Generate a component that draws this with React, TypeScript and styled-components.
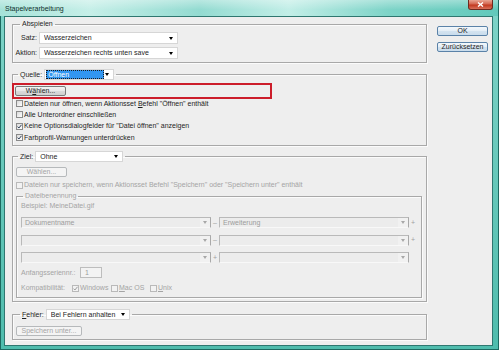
import React from "react";
import styled, { createGlobalStyle } from "styled-components";

const Global = createGlobalStyle`
  html, body { margin: 0; padding: 0; }
  body {
    width: 499px; height: 350px; overflow: hidden;
    font-family: "Liberation Sans", Arial, sans-serif;
    font-size: 7px; color: #1e1e1e;
  }
  #root { width: 499px; height: 350px; }
`;

const Window = styled.div`
  box-sizing: border-box;
  width: 499px;
  height: 350px;
  display: flex;
  flex-direction: column;
  background: linear-gradient(180deg, #7fd4c8 0%, #4fbcad 100%);
  border: 1px solid #1d6a61;
  border-top: none;
  padding: 0 5px 3px 3px;
`;

const TitleBar = styled.div`
  height: 16px;
  margin: 0 -5px 0 -4px;
  display: flex;
  align-items: flex-start;
  justify-content: space-between;
  background:
    linear-gradient(180deg, rgba(255,255,255,0.35) 0%, rgba(255,255,255,0) 60%),
    linear-gradient(90deg, #a6e2d8 0%, #c6efe8 18%, #93dbd1 40%, #c2eee7 58%, #7ed4c8 78%, #62c9bb 100%);
`;

const Title = styled.span`
  margin: 5px 0 0 5px;
  font-size: 7px;
  line-height: 8px;
  color: #10302c;
`;

const CloseBtn = styled.div`
  box-sizing: border-box;
  width: 25px;
  height: 10px;
  margin-right: 5px;
  border: 1px solid #6e2a20;
  border-top: none;
  border-radius: 0 0 3px 3px;
  background: linear-gradient(180deg, #e9a593 0%, #d46650 45%, #c2381f 55%, #d8705a 100%);
  display: flex;
  align-items: center;
  justify-content: center;
`;

const Client = styled.div`
  flex: 1;
  box-sizing: border-box;
  background: #eeeeee;
  border: 1px solid #2f7770;
  display: flex;
  align-items: flex-start;
  padding: 3px 0 0 7px;
`;

const Main = styled.div`
  width: 415px;
  display: flex;
  flex-direction: column;
`;

const Side = styled.div`
  margin: 6px 0 0 10px;
  display: flex;
  flex-direction: column;
  gap: 6px;
`;

const Group = styled.fieldset<{ $mt?: number }>`
  margin: ${(p) => p.$mt ?? 0}px 0 0 0;
  padding: 0;
  min-width: 0;
  border: 1px solid #a8a8a8;
  box-shadow: inset 1px 1px 0 #fbfbfb, 1px 1px 0 #fbfbfb;
`;

const Legend = styled.legend<{ $ml: number }>`
  margin-left: ${(p) => p.$ml}px;
  padding: 0 2px;
`;

const LegendRow = styled.span<{ $h: number; $gap?: number; $disabled?: boolean }>`
  display: flex;
  align-items: center;
  gap: ${(p) => p.$gap ?? 2}px;
  height: ${(p) => p.$h}px;
  line-height: ${(p) => p.$h}px;
  color: ${(p) => (p.$disabled ? "#a4a4a4" : "#1e1e1e")};
`;

const Body = styled.div<{ $p: string }>`
  padding: ${(p) => p.$p};
  display: flex;
  flex-direction: column;
  align-items: flex-start;
`;

const FormGrid = styled.div`
  display: grid;
  grid-template-columns: 24px 139px;
  grid-auto-rows: 12px;
  column-gap: 2px;
  row-gap: 3px;
  align-items: center;
`;

const Label = styled.span<{ $w?: number; $disabled?: boolean }>`
  text-align: ${(p) => (p.$w ? "left" : "right")};
  ${(p) => (p.$w ? `width: ${p.$w}px; flex: none;` : "")}
  line-height: 8px;
  white-space: nowrap;
  color: ${(p) => (p.$disabled ? "#a4a4a4" : "#1e1e1e")};
`;

const Select = styled.div<{ $w: number; $h: number }>`
  box-sizing: border-box;
  width: ${(p) => p.$w}px;
  height: ${(p) => p.$h}px;
  background: #fff;
  border: 1px solid #d6d6d6;
  display: flex;
  align-items: center;
  padding: 0 4px 0 4px;
  white-space: nowrap;
  line-height: 8px;
`;

const SelText = styled.span`
  flex: 1;
  overflow: hidden;
`;

const Highlight = styled.span`
  box-sizing: border-box;
  width: 58px;
  height: 9px;
  margin-left: -3px;
  background: #3296f0;
  color: #fff;
  outline: 1px dotted #1a1a1a;
  outline-offset: -1px;
  padding-left: 2px;
  line-height: 9px;
`;

const Arrow = styled.span<{ $color?: string }>`
  width: 0;
  height: 0;
  flex: none;
  border-left: 2.5px solid transparent;
  border-right: 2.5px solid transparent;
  border-top: 3px solid ${(p) => p.$color ?? "#000"};
  margin-left: auto;
`;

const RedMark = styled.div`
  box-sizing: border-box;
  width: 260px;
  height: 16px;
  margin: 0 0 -1px -1px;
  border: 2px solid #cc1d2a;
  padding: 1px;
`;

const Button = styled.button<{ $w: number; $variant?: "blue" | "normal" | "disabled" }>`
  box-sizing: border-box;
  width: ${(p) => p.$w}px;
  height: 10px;
  padding: 0;
  margin: 0;
  font-family: inherit;
  font-size: 7px;
  line-height: 8px;
  border-radius: 2px;
  display: flex;
  align-items: center;
  justify-content: center;
  border: 1px solid
    ${(p) => (p.$variant === "blue" ? "#5a82a8" : p.$variant === "disabled" ? "#b6b9bb" : "#7a7a7a")};
  background: ${(p) =>
    p.$variant === "blue"
      ? "linear-gradient(180deg, #f3f8fc 0%, #e3edf6 50%, #d3e3f0 51%, #c9dcec 100%)"
      : p.$variant === "disabled"
      ? "#f4f4f4"
      : "linear-gradient(180deg, #f4f4f4 0%, #e8e8e8 50%, #dadada 51%, #d0d0d0 100%)"};
  color: ${(p) => (p.$variant === "disabled" ? "#a4a4a4" : "#1e1e1e")};
`;

const CheckList = styled.div<{ $pl?: number; $mt?: number }>`
  padding-left: ${(p) => p.$pl ?? 3}px;
  margin-top: ${(p) => p.$mt ?? 0}px;
  display: flex;
  flex-direction: column;
`;

const CheckRow = styled.div<{ $h: number; $disabled?: boolean; $w?: number }>`
  display: flex;
  align-items: center;
  gap: 1px;
  height: ${(p) => p.$h}px;
  ${(p) => (p.$w ? `width: ${p.$w}px;` : "")}
  white-space: nowrap;
  line-height: 8px;
  color: ${(p) => (p.$disabled ? "#a4a4a4" : "#1e1e1e")};
`;

const Box = styled.span<{ $disabled?: boolean }>`
  box-sizing: border-box;
  width: 7px;
  height: 7px;
  flex: none;
  border: 1px solid ${(p) => (p.$disabled ? "#b9b9b9" : "#8a8a8a")};
  background: ${(p) => (p.$disabled ? "#f2f2f2" : "linear-gradient(135deg, #d9d9d9 0%, #ffffff 100%)")};
  display: inline-flex;
  align-items: center;
  justify-content: center;
`;

const InnerGroup = styled(Group)`
  box-sizing: border-box;
  width: 406px;
`;

const FileGrid = styled.div`
  margin-top: 7px;
  display: grid;
  grid-template-columns: 190px 8px 190px 8px;
  grid-auto-rows: 11px;
  row-gap: 6.5px;
  align-items: center;
`;

const FileSelect = styled.div`
  box-sizing: border-box;
  height: 11px;
  background: #ececec;
  border: 1px solid #b9b9b9;
  border-bottom-color: #f8f8f8;
  border-right-color: #a9a9a9;
  display: flex;
  align-items: center;
  color: #9c9c9c;
  line-height: 8px;
  padding-left: 3px;
`;

const FileDrop = styled.span`
  margin-left: auto;
  width: 10px;
  height: 9px;
  flex: none;
  background: #f1f1f1;
  display: flex;
  align-items: center;
  justify-content: center;
`;

const FileArrow = styled.span`
  width: 0;
  height: 0;
  border-left: 2.5px solid transparent;
  border-right: 2.5px solid transparent;
  border-top: 3px solid #a8a8a8;
`;

const Sep = styled.span`
  text-align: center;
  color: #a0a0a0;
  line-height: 8px;
`;

const InlineRow = styled.div<{ $mt: number; $h: number }>`
  margin-top: ${(p) => p.$mt}px;
  height: ${(p) => p.$h}px;
  display: flex;
  align-items: center;
`;

const NumInput = styled.div`
  box-sizing: border-box;
  width: 22px;
  height: 11px;
  border: 1px solid #bdbdbd;
  background: #f3f3f3;
  color: #9c9c9c;
  padding-left: 4px;
  line-height: 9px;
`;

const Plain = styled.span<{ $disabled?: boolean }>`
  line-height: 8px;
  white-space: nowrap;
  color: ${(p) => (p.$disabled ? "#a4a4a4" : "#1e1e1e")};
`;

const U = styled.span`
  text-decoration: underline;
`;

const Check = ({ color }: { color: string }) => (
  <svg width="5" height="5" viewBox="0 0 5 5">
    <path d="M0.5 2.6 L1.9 4 L4.5 0.8" fill="none" stroke={color} strokeWidth="1" />
  </svg>
);

const CheckItem = ({
  label,
  checked,
  disabled,
  h,
  w,
}: {
  label: React.ReactNode;
  checked?: boolean;
  disabled?: boolean;
  h: number;
  w?: number;
}) => (
  <CheckRow $h={h} $disabled={disabled} $w={w}>
    <Box $disabled={disabled}>{checked && <Check color={disabled ? "#9a9a9a" : "#2b3b55"} />}</Box>
    <span>{label}</span>
  </CheckRow>
);

const FileCell = ({ text }: { text?: string }) => (
  <FileSelect>
    <span>{text}</span>
    <FileDrop>
      <FileArrow />
    </FileDrop>
  </FileSelect>
);

export default function App() {
  return (
    <>
      <Global />
      <Window>
        <TitleBar>
          <Title>Stapelverarbeitung</Title>
          <CloseBtn>
            <svg width="7" height="5" viewBox="0 0 7 5">
              <path d="M1 0.5 L6 4.5 M6 0.5 L1 4.5" stroke="#fff" strokeWidth="1.4" />
            </svg>
          </CloseBtn>
        </TitleBar>
        <Client>
          <Main>
            <Group>
              <Legend $ml={7}>
                <LegendRow $h={8}>Abspielen</LegendRow>
              </Legend>
              <Body $p="4px 0 3px 0">
                <FormGrid>
                  <Label>Satz:</Label>
                  <Select $w={139} $h={12}>
                    <SelText>Wasserzeichen</SelText>
                    <Arrow />
                  </Select>
                  <Label>Aktion:</Label>
                  <Select $w={139} $h={12}>
                    <SelText>Wasserzeichen rechts unten save</SelText>
                    <Arrow />
                  </Select>
                </FormGrid>
              </Body>
            </Group>

            <Group $mt={6}>
              <Legend $ml={5}>
                <LegendRow $h={11} $gap={2}>
                  <span>Quelle:</span>
                  <Select $w={70} $h={11}>
                    <Highlight>Öffnen</Highlight>
                    <Arrow />
                  </Select>
                </LegendRow>
              </Legend>
              <Body $p="3px 0 2px 0">
                <RedMark>
                  <Button $w={51} $variant="normal">
                    W<U>ä</U>hlen...
                  </Button>
                </RedMark>
                <CheckList>
                  <CheckItem h={11.3} label={<>Dateien nur öffnen, wenn Aktionsset <U>B</U>efehl "Öffnen" enthält</>} />
                  <CheckItem h={11.3} label="Alle Unterordner einschließen" />
                  <CheckItem h={11.3} checked label={'Keine Optionsdialogfelder für "Datei öffnen" anzeigen'} />
                  <CheckItem h={11.3} checked label="Farbprofil-Warnungen unterdrücken" />
                </CheckList>
              </Body>
            </Group>

            <Group $mt={5}>
              <Legend $ml={5}>
                <LegendRow $h={11} $gap={2}>
                  <span>Ziel:</span>
                  <Select $w={88} $h={11}>
                    <SelText>Ohne</SelText>
                    <Arrow />
                  </Select>
                </LegendRow>
              </Legend>
              <Body $p="5px 4px 3px 3px">
                <Button $w={51} $variant="disabled">
                  Wählen...
                </Button>
                <CheckList $pl={0} $mt={3}>
                  <CheckItem
                    h={10}
                    disabled
                    label={'Dateien nur speichern, wenn Aktionsset Befehl "Speichern" oder "Speichern unter" enthält'}
                  />
                </CheckList>
                <InnerGroup $mt={2}>
                  <Legend $ml={6}>
                    <LegendRow $h={8} $disabled>
                      Dateibenennung
                    </LegendRow>
                  </Legend>
                  <Body $p="2px 0 4px 4px">
                    <Plain $disabled>Beispiel: MeineDatei.gif</Plain>
                    <FileGrid>
                      <FileCell text="Dokumentname" />
                      <Sep>–</Sep>
                      <FileCell text="Erweiterung" />
                      <Sep>+</Sep>
                      <FileCell />
                      <Sep>–</Sep>
                      <FileCell />
                      <Sep>+</Sep>
                      <FileCell />
                      <Sep>+</Sep>
                      <FileCell />
                      <Sep />
                    </FileGrid>
                    <InlineRow $mt={4} $h={11}>
                      <Label $w={59} $disabled>
                        Anfangsseriennr.:
                      </Label>
                      <NumInput>1</NumInput>
                    </InlineRow>
                    <InlineRow $mt={5} $h={10}>
                      <Label $w={51} $disabled>
                        Kompatibilität:
                      </Label>
                      <CheckItem h={10} w={39} disabled checked label="Windows" />
                      <CheckItem h={10} w={39} disabled label={<><U>M</U>ac OS</>} />
                      <CheckItem h={10} disabled label={<><U>U</U>nix</>} />
                    </InlineRow>
                  </Body>
                </InnerGroup>
              </Body>
            </Group>

            <Group $mt={7}>
              <Legend $ml={7}>
                <LegendRow $h={11} $gap={2}>
                  <span>
                    <U>F</U>ehler:
                  </span>
                  <Select $w={84} $h={11}>
                    <SelText>Bei Fehlern anhalten</SelText>
                    <Arrow />
                  </Select>
                </LegendRow>
              </Legend>
              <Body $p="6px 0 3px 3px">
                <Button $w={66} $variant="disabled">
                  Speichern unter...
                </Button>
              </Body>
            </Group>
          </Main>
          <Side>
            <Button $w={51} $variant="blue">
              OK
            </Button>
            <Button $w={51} $variant="blue">
              Zurücksetzen
            </Button>
          </Side>
        </Client>
      </Window>
    </>
  );
}
